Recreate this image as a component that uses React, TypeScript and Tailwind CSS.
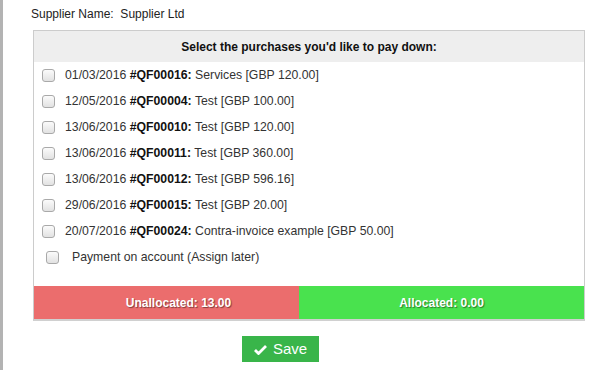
import React from "react";

const rows = [
  ["01/03/2016", "#QF00016:", "Services [GBP 120.00]"],
  ["12/05/2016", "#QF00004:", "Test [GBP 100.00]"],
  ["13/06/2016", "#QF00010:", "Test [GBP 120.00]"],
  ["13/06/2016", "#QF00011:", "Test [GBP 360.00]"],
  ["13/06/2016", "#QF00012:", "Test [GBP 596.16]"],
  ["29/06/2016", "#QF00015:", "Test [GBP 20.00]"],
  ["20/07/2016", "#QF00024:", "Contra-invoice example [GBP 50.00]"],
];

function Box() {
  return (
    <span className="inline-block w-[13px] h-[13px] rounded-[3px] border border-[#a9a9a9] bg-gradient-to-b from-[#fbfbfb] to-[#e2e2e2] shrink-0" />
  );
}

export default function App() {
  return (
    <div
      className="w-[595px] h-[370px] bg-white flex text-[12px] text-[#333]"
      style={{ fontFamily: '"Liberation Sans", Arial, sans-serif' }}
    >
      <div className="w-[3px] h-full bg-[#b3b3b3]" />
      <div className="flex-1 flex flex-col">
        <div className="pl-[28px] pt-[5px] h-[30px] text-[#222]">Supplier Name:&nbsp; Supplier Ltd</div>
        <div className="ml-[30px] w-[552px] border border-[#cccccc] border-b-2 border-b-[#d0d0d0] flex flex-col">
          <div className="h-[31px] bg-[#eeeeee] flex items-center justify-center font-bold text-[#111]">
            Select the purchases you'd like to pay down:
          </div>
          <div className="flex flex-col text-[12.25px]">
            {rows.map((r, i) => (
              <div key={i} className="h-[26px] flex items-center pl-[8px] gap-[10px]">
                <Box />
                <span>
                  {r[0]} <b className="text-[#111]">{r[1]}</b> {r[2]}
                </span>
              </div>
            ))}
            <div className="h-[26px] flex items-center pl-[12px] gap-[13px]">
              <Box />
              <span>Payment on account (Assign later)</span>
            </div>
          </div>
          <div className="mt-[16px] h-[33px] flex font-bold text-white [text-shadow:1px_1px_1px_rgba(0,0,0,0.45)]">
            <div className="w-[265px] bg-[#eb6d6d] flex items-center justify-center pl-[24px]">Unallocated: 13.00</div>
            <div className="flex-1 bg-[#49e24e] flex items-center justify-center">Allocated: 0.00</div>
          </div>
        </div>
        <div className="flex pl-[239px] pt-[15px]">
          <button className="w-[77px] h-[26px] bg-[#39b54a] text-white text-[15px] flex items-center justify-center gap-[6px]">
            <svg width="13" height="11" viewBox="0 0 13 11">
              <path d="M1 6 L4.5 9.5 L12 2" fill="none" stroke="white" strokeWidth="2.8" />
            </svg>
            Save
          </button>
        </div>
      </div>
    </div>
  );
}
